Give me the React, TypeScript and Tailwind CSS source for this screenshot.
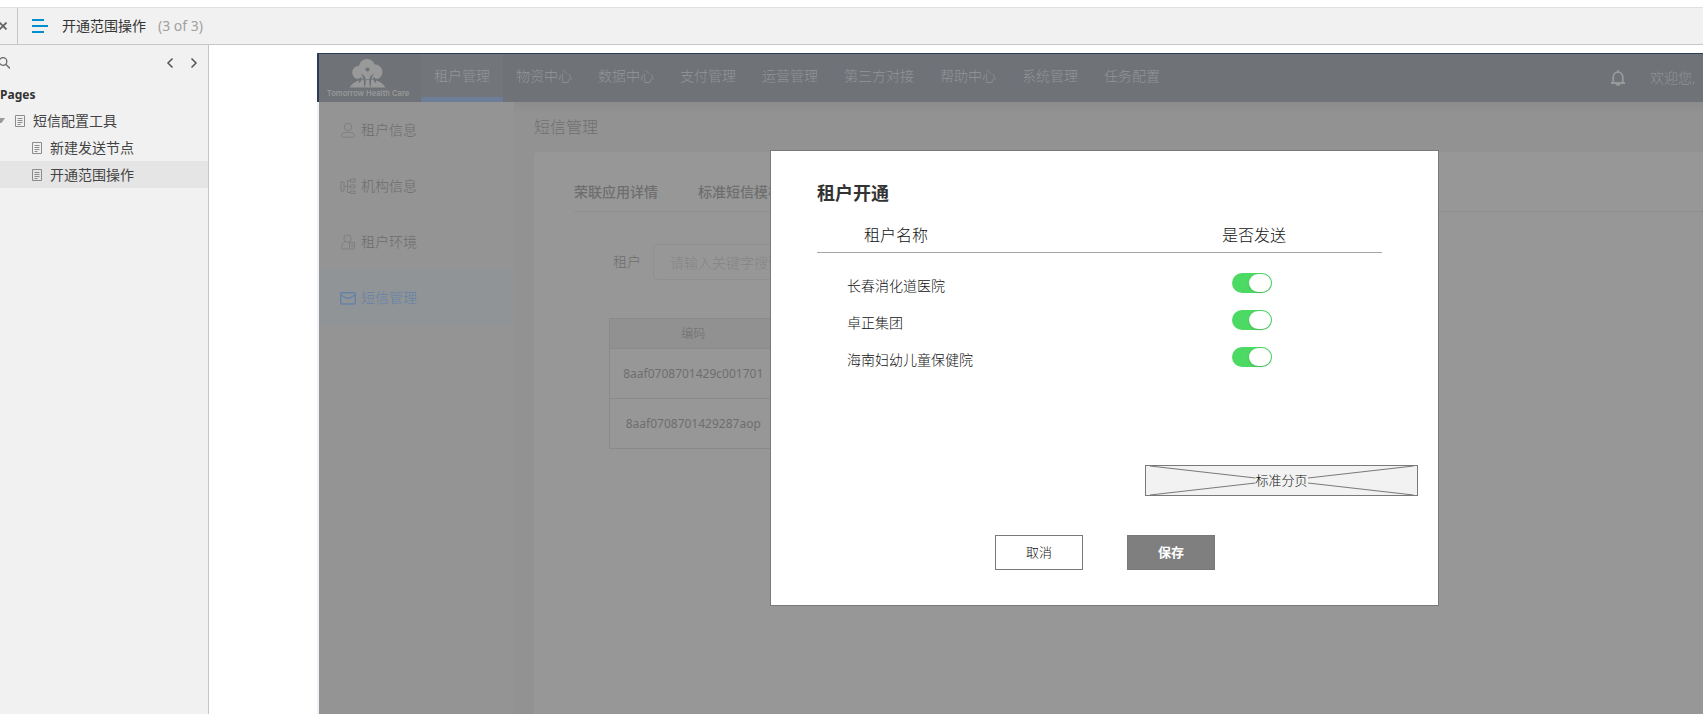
const pages = [
  { name: "新建发送节点", current: false },
  { name: "开通范围操作", current: true },
];

const navigation = [
  { name: "租户管理", current: true },
  { name: "物资中心", current: false },
  { name: "数据中心", current: false },
  { name: "支付管理", current: false },
  { name: "运营管理", current: false },
  { name: "第三方对接", current: false },
  { name: "帮助中心", current: false },
  { name: "系统管理", current: false },
  { name: "任务配置", current: false },
];

const codes = ["8aaf0708701429c001701", "8aaf0708701429287aop"];

const tenants = ["长春消化道医院", "卓正集团", "海南妇幼儿童保健院"];

function classNames(...classes: string[]) {
  return classes.filter(Boolean).join(" ");
}

const PageIcon = () => (
  <svg className="h-3 w-2.5 shrink-0" viewBox="0 0 10 12" fill="none" stroke="#8c8c8c" aria-hidden="true">
    <path d="M.5.5h9v11h-9zM2.5 3.5h5M2.5 5.5h5M2.5 7.5h5M2.5 9.5h3" />
  </svg>
);

const UserIcon = () => (
  <svg className="size-4" viewBox="0 0 16 16" fill="none" stroke="#808080" aria-hidden="true">
    <circle cx="8" cy="5" r="3.8" />
    <path d="M4.5 10.5C2.8 10.7 1.5 11.8 1.5 13.5c0 1.200.7 1.700 1.700 1.700h9.600c1 0 1.700-.5 1.700-1.700 0-1.700-1.300-2.800-3-3z" />
  </svg>
);

const OrgIcon = () => (
  <svg className="size-4" viewBox="0 0 16 16" fill="none" stroke="#7c7c7c" aria-hidden="true">
    <path d="M1 4h3v9H1zM10.5 1h4.500v3h-4.500zM10.500 7h4.500v3h-4.500zM10.500 13h4.500v2.500h-4.500zM4 8.500h6.500M10.500 2.500H7.500v12h3" />
  </svg>
);

const EnvIcon = () => (
  <svg className="size-4" viewBox="0 0 16 16" fill="none" stroke="#808080" aria-hidden="true">
    <circle cx="7.500" cy="4.500" r="3.700" />
    <path d="M5 7.500C2.800 9 1.500 11 1.500 13.500c0 1 .5 1.500 1.500 1.500h11.500V8.500h-5V15M11 10.500h2.500M11 12.500h2.500" />
  </svg>
);

const MailIcon = () => (
  <svg className="size-4" viewBox="0 0 16 16" fill="none" stroke="currentColor" strokeWidth="1.4" aria-hidden="true">
    <rect x="0.700" y="2.700" width="14.600" height="11.300" rx="1" />
    <path d="m1 5 4 2.500c2 1 4 1 6 0L15 5" />
  </svg>
);

const menu = [
  { name: "租户信息", icon: UserIcon, current: false },
  { name: "机构信息", icon: OrgIcon, current: false },
  { name: "租户环境", icon: EnvIcon, current: false },
  { name: "短信管理", icon: MailIcon, current: true },
];

const Logo = () => (
  <svg className="h-10 w-[90px]" viewBox="0 0 90 40" aria-label="Tomorrow Health Care" role="img">
    <g fill="#999999">
      <circle cx="42" cy="9" r="8" />
      <circle cx="34" cy="14.500" r="6.800" />
      <circle cx="50" cy="14" r="7.500" />
      <path d="M33 12h18v9.300H33z" />
      <path d="M24.500 29.500c3-4.500 7-6.800 12.500-7.500h11c5.500.7 9.500 3 12.500 7.500z" />
    </g>
    <circle cx="42.500" cy="11.500" r="2.100" fill="#6f7277" />
    <g fill="#6f7277">
      <path d="M36 15.500c3.500 1.500 5 4.500 4.800 8 0 2.500-.6 4.500-1.800 6 .4-5.500-.2-10-3-14z" />
      <path d="M49 15.500c-3.500 1.500-5 4.500-4.800 8 0 2.500.6 4.500 1.800 6-.4-5.500.2-10 3-14z" />
      <path d="M26 21.500c5 0 8.500-.5 10.500-2.500 1 2-.5 5-3 6.500.5-1.500.8-2.500.5-3.500-2.500-.5-5 0-7.500 1z" />
      <path d="M59 21.500c-5 0-8.500-.5-10.500-2.500-1 2 .5 5 3 6.500-.5-1.500-.8-2.500-.5-3.500 2.500-.5 5 0 7.500 1z" />
    </g>
    <text x="43" y="38" textAnchor="middle" fontSize="7.6" fontFamily="Inter, sans-serif" fontWeight="600" fill="#999999">
      Tomorrow Health Care
    </text>
  </svg>
);

const PagesPanel = () => (
  <aside className="w-[209px] shrink-0 border-r border-[#c6c6c6] bg-[#f1f1f1] text-sm text-[#444]">
    <div className="flex h-9 items-center justify-between pr-2.5">
      <button type="button" aria-label="Search">
        <svg className="h-3 w-2.5" viewBox="0 0 10 12" fill="none" stroke="#666" strokeWidth="1.300" aria-hidden="true">
          <circle cx="3" cy="4.500" r="3.800" />
          <path d="m6 7.500 4 4" />
        </svg>
      </button>
      <div className="flex gap-4">
        <button type="button" aria-label="Previous page">
          <svg className="h-3 w-2" viewBox="0 0 8 12" fill="none" stroke="#555" strokeWidth="1.500" aria-hidden="true">
            <path d="M6.500 1.500 2 6l4.500 4.500" />
          </svg>
        </button>
        <button type="button" aria-label="Next page">
          <svg className="h-3 w-2" viewBox="0 0 8 12" fill="none" stroke="#555" strokeWidth="1.500" aria-hidden="true">
            <path d="M1.500 1.500 6 6l-4.500 4.500" />
          </svg>
        </button>
      </div>
    </div>
    <h2 className="h-[26px] text-xs leading-7 font-bold text-[#333]">Pages</h2>
    <ul>
      <li>
        <a href="#pages" className="flex h-[27px] items-center">
          <svg className="h-1.5 w-[15px]" viewBox="0 0 15 6" fill="#999" aria-hidden="true">
            <path d="M0 0h5L1.500 5H0z" />
          </svg>
          <PageIcon />
          <span className="pl-2">短信配置工具</span>
        </a>
      </li>
      {pages.map((page) => (
        <li key={page.name}>
          <a
            href="#page"
            className={classNames(
              "flex h-[27px] items-center gap-2 pl-8",
              page.current ? "bg-[#e5e5e5]" : ""
            )}
          >
            <PageIcon />
            {page.name}
          </a>
        </li>
      ))}
    </ul>
  </aside>
);

const Header = () => (
  <header className="flex h-[49px] border-t border-l-2 border-[#2d3c58] bg-[#6f7277] text-sm text-[#939598]">
    <div className="flex w-[102px] shrink-0 justify-center pt-1">
      <Logo />
    </div>
    <nav className="flex grow">
      {navigation.map((item) => (
        <a
          key={item.name}
          href="#nav"
          className={classNames(
            "flex shrink-0 items-center border-b-[5px] px-[13px] pt-px font-light",
            item.current
              ? "border-[#6b7d97] bg-[#727579]"
              : "border-transparent"
          )}
        >
          {item.name}
        </a>
      ))}
    </nav>
    <div className="flex shrink-0 items-center gap-6">
      <button type="button" aria-label="Notifications">
        <svg className="size-4" viewBox="0 0 16 16" fill="none" stroke="#999" strokeWidth="1.800" aria-hidden="true">
          <path d="M1 13h14M3.200 13V7.500C3.200 4.500 5 2.200 8 2.200s4.800 2.300 4.800 5.300V13M8 0v2" />
          <path d="M6.200 13.500c.2 2 3.400 2 3.600 0" />
        </svg>
      </button>
      <span className="w-[53px] font-light whitespace-nowrap">欢迎您,</span>
    </div>
  </header>
);

const SideMenu = () => (
  <ul className="w-[197px] shrink-0 border-l-2 border-[#eef2f7] bg-[#949494] text-sm text-[#6c6c6c]">
    {menu.map((item) => (
      <li key={item.name}>
        <a
          href="#menu"
          className={classNames(
            "flex h-14 items-center gap-[5px] pl-[21px] font-light",
            item.current ? "bg-[#919496] text-[#6482a8]" : ""
          )}
        >
          <item.icon />
          {item.name}
        </a>
      </li>
    ))}
  </ul>
);

const Content = () => (
  <main className="flex min-w-0 grow flex-col bg-[#929292] bg-linear-to-b from-[#8c8c8c] to-[#929292] to-[12px] pl-5">
    <h1 className="h-[50px] text-base leading-[50px] font-light text-[#707070]">短信管理</h1>
    <section className="grow rounded-tl-sm bg-[#979797] pt-6 pl-10 text-[#6e6e6e]">
      <div className="flex h-9 gap-10 border-b border-[#8f8f8f] text-sm leading-8 font-medium">
        <a href="#detail">荣联应用详情</a>
        <a href="#template">标准短信模板</a>
      </div>
      <div className="flex items-center gap-3 pt-8 pl-[39px] text-sm font-light">
        <label htmlFor="tenant">租户</label>
        <input
          id="tenant"
          type="text"
          placeholder="请输入关键字搜索"
          className="h-9 w-60 rounded-sm border border-[#909090] px-4 placeholder:text-[#858585]"
        />
      </div>
      <table className="mt-[38px] ml-[35px] w-[336px] table-fixed border-collapse text-center text-xs">
        <thead>
          <tr className="h-[30px] bg-[#919191]">
            <th className="border border-[#8a8a8a] font-light">编码</th>
            <th className="border border-[#8a8a8a]" />
          </tr>
        </thead>
        <tbody>
          {codes.map((code) => (
            <tr key={code} className="h-[50px]">
              <td className="border border-[#8a8a8a]">{code}</td>
              <td className="border border-[#8a8a8a]" />
            </tr>
          ))}
        </tbody>
      </table>
    </section>
  </main>
);

const TenantDialog = () => (
  <div
    role="dialog"
    aria-labelledby="dialog-title"
    className="absolute top-[97px] left-[453px] w-[669px] border border-[#797979] bg-white px-5 pt-7 pb-[35px] text-[#111]"
  >
    <h2 id="dialog-title" className="pl-[26px] text-lg leading-7 font-bold text-[#333]">
      租户开通
    </h2>
    <div className="mt-2.5 mr-9 ml-[26px] grid h-9 grid-cols-[388px_1fr] items-center border-b border-[#a5a5a5] text-base font-light">
      <span className="pl-[47px]">租户名称</span>
      <span className="pl-[17px]">是否发送</span>
    </div>
    <div className="mr-9 ml-[26px] pt-3.5">
      {tenants.map((tenant, index) => (
        <label
          key={tenant}
          htmlFor={`tenant-${index}`}
          className="grid h-[37px] grid-cols-[415px_1fr] items-center text-sm font-light"
        >
          <span className="pl-[30px]">{tenant}</span>
          <span className="relative mt-1.5 flex h-5 w-10 self-start">
            <input
              id={`tenant-${index}`}
              type="checkbox"
              role="switch"
              defaultChecked
              className="peer h-5 w-10 appearance-none rounded-full bg-gray-300 checked:bg-[#4cd964]"
            />
            <span className="pointer-events-none absolute inset-y-px left-px w-[22px] rounded-full bg-white shadow-sm peer-checked:right-px peer-checked:left-auto" />
          </span>
        </label>
      ))}
    </div>
    <div className="mt-[87px] ml-auto flex h-[31px] w-[273px] items-center border border-[#797979] bg-[#f2f2f2] text-[13px] font-light">
      <svg className="h-full grow" viewBox="0 0 109 29" preserveAspectRatio="none" stroke="#797979" aria-hidden="true">
        <path d="M4 0 109 12M4 29 109 17" />
      </svg>
      <span>标准分页</span>
      <svg className="h-full grow" viewBox="0 0 109 29" preserveAspectRatio="none" stroke="#797979" aria-hidden="true">
        <path d="M105 0 0 12M105 29 0 17" />
      </svg>
    </div>
    <div className="mt-[39px] flex gap-11 pl-[204px] text-[13px]">
      <button type="button" className="h-[35px] w-[88px] border border-[#797979] bg-white font-light">
        取消
      </button>
      <button type="button" className="h-[35px] w-[88px] border border-[#797979] bg-[#7f7f7f] font-bold text-white">
        保存
      </button>
    </div>
  </div>
);

const App = () => {
  return (
    <div className="flex h-screen flex-col overflow-hidden bg-white pt-[7px] font-['Noto_Sans','Noto_Sans_CJK_SC',sans-serif]">
      <div className="flex h-[38px] shrink-0 items-center border-t border-b border-t-[#e0e0e0] border-b-[#c6c6c6] bg-[#f1f1f1] text-sm text-[#333]">
        <button type="button" aria-label="Close" className="h-full w-[18px] border-r border-[#c6c6c6]">
          <svg className="h-2 w-2" viewBox="0 0 8 8" stroke="#666" strokeWidth="1.800" aria-hidden="true">
            <path d="m-.5.500 7 7M6.500.500l-7 7" />
          </svg>
        </button>
        <svg className="ml-3.5 h-3.5 w-4" viewBox="0 0 16 14" stroke="#008fcc" strokeWidth="2" aria-hidden="true">
          <path d="M0 1h12M0 7h16M0 13h12" />
        </svg>
        <h1 className="pl-3.5">开通范围操作</h1>
        <span className="pl-3 text-[#a0a0a0]">(3 of 3)</span>
      </div>
      <div className="flex min-h-0 grow">
        <PagesPanel />
        <div className="min-w-0 grow overflow-hidden pt-2 pl-[108px]">
          <div className="relative flex h-full flex-col">
            <Header />
            <div className="flex min-h-0 grow">
              <SideMenu />
              <Content />
            </div>
            <TenantDialog />
          </div>
        </div>
      </div>
    </div>
  );
};

export default App;
